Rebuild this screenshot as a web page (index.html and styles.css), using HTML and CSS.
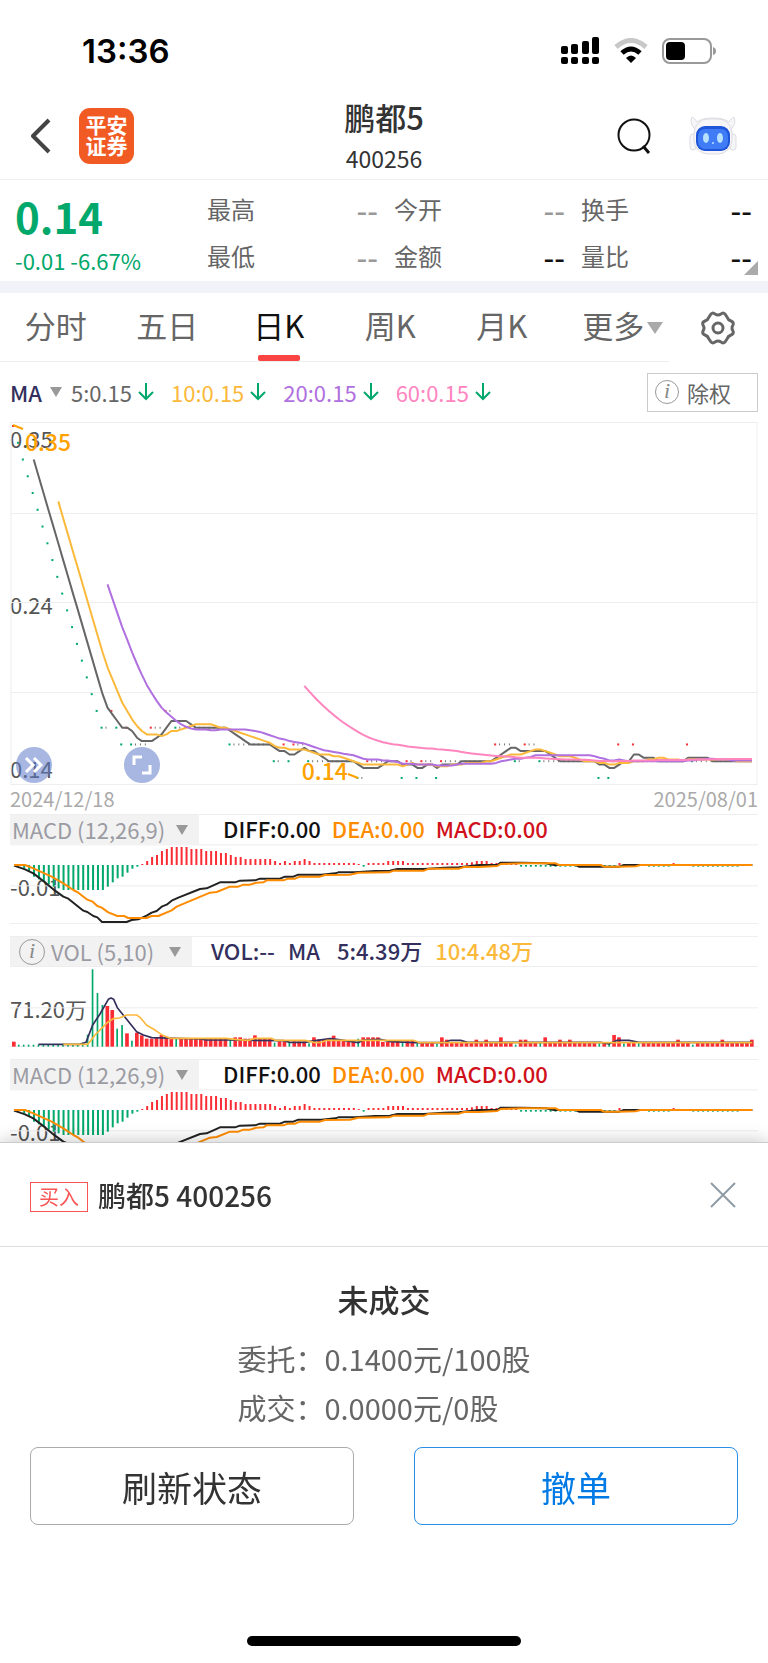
FILE: index.html
```html
<!DOCTYPE html>
<html lang="zh-CN">
  <head>
    <meta charset="UTF-8" />
    <meta name="viewport" content="width=device-width, initial-scale=1.0" />
    <title>鹏都5 400256</title>
    <link rel="stylesheet" href="styles.css" />
  </head>
  <body>
    <!-- Barre d'état -->
    <div class="status">
      <span class="time">13:36</span>
      <div class="status-icons">
        <svg width="40" height="28" viewBox="0 0 40 28">
          <rect x="1" y="9" width="7" height="8" rx="2" />
          <rect x="11" y="7" width="7" height="10" rx="2" />
          <rect x="22" y="4" width="7" height="13" rx="2" />
          <rect x="32" y="0" width="7" height="17" rx="2" />
          <rect x="1" y="20" width="7" height="7" rx="2" />
          <rect x="11" y="20" width="7" height="7" rx="2" />
          <rect x="22" y="20" width="7" height="7" rx="2" />
          <rect x="32" y="20" width="7" height="7" rx="2" />
        </svg>
        <svg width="34" height="26" viewBox="0 0 34 26" fill="none">
          <path d="M2 9 Q17 -4 32 9" stroke="#c8c8c8" stroke-width="5" />
          <path d="M8 15 Q17 7 26 15" stroke="#000" stroke-width="5" />
          <path d="M12 20 Q17 15 22 20 L17 25 Z" fill="#000" />
        </svg>
        <svg width="54" height="26" viewBox="0 0 54 26">
          <rect x="1" y="1" width="48" height="24" rx="7" fill="none" stroke="#999" stroke-width="2" />
          <rect x="4" y="4" width="19" height="18" rx="4" />
          <path d="M51 9 Q54 10 54 13 Q54 16 51 17 Z" fill="#999" />
        </svg>
      </div>
    </div>

    <!-- En-tête -->
    <header class="header">
      <div class="header-left">
        <button class="icon-btn" aria-label="返回">
          <svg width="20" height="36" viewBox="0 0 20 36">
            <path d="M18 2 L2 18 L18 34" fill="none" stroke="#444" stroke-width="4" stroke-linejoin="round" />
          </svg>
        </button>
        <span class="logo">平安<br />证券</span>
      </div>
      <div class="header-title">
        <h1>鹏都5</h1>
        <span>400256</span>
      </div>
      <div class="header-right">
        <button class="icon-btn" aria-label="搜索">
          <svg width="34" height="36" viewBox="0 0 34 36" fill="none" stroke="#111" stroke-width="2">
            <circle cx="17" cy="17" r="15.5" />
            <path d="M26 28 L32 35" stroke-width="3" />
          </svg>
        </button>
        <button class="icon-btn" aria-label="助手">
          <svg width="48" height="40" viewBox="0 0 48 40">
            <g fill="#f6f6f8" stroke="#dcdde2">
              <path d="M7 14 Q0 8 3 1 Q6 2 8 6 Q13 2 24 2 Q35 2 40 6 Q42 2 45 1 Q48 8 41 14 Z" />
              <rect x="1" y="18" width="6" height="16" rx="3" />
              <rect x="41" y="18" width="6" height="16" rx="3" />
              <rect x="5" y="3" width="38" height="35" rx="14" />
            </g>
            <rect x="7" y="10" width="34" height="25" rx="9" fill="#1f55d8" />
            <rect x="9" y="13" width="30" height="20" rx="7" fill="#3f7cf5" />
            <ellipse cx="17" cy="22" rx="3" ry="5" fill="#b8e0ff" />
            <ellipse cx="31" cy="22" rx="3" ry="5" fill="#b8e0ff" />
            <circle cx="24" cy="27" r="1" fill="#b8e0ff" />
          </svg>
        </button>
      </div>
    </header>

    <!-- Cotation -->
    <section class="quote">
      <div class="price">
        <strong>0.14</strong>
        <span>-0.01 -6.67%</span>
      </div>
      <dl class="stats">
        <div><dt>最高</dt><dd class="muted">--</dd></div>
        <div><dt>今开</dt><dd class="muted">--</dd></div>
        <div><dt>换手</dt><dd>--</dd></div>
        <div><dt>最低</dt><dd class="muted">--</dd></div>
        <div><dt>金额</dt><dd>--</dd></div>
        <div><dt>量比</dt><dd>--</dd></div>
      </dl>
    </section>

    <!-- Onglets -->
    <nav class="tabs">
      <div class="tab-list">
        <a href="#">分时</a>
        <a href="#">五日</a>
        <a href="#" class="active">日K</a>
        <a href="#">周K</a>
        <a href="#">月K</a>
        <a href="#">更多<i class="caret"></i></a>
      </div>
      <button class="icon-btn gear" aria-label="设置">
        <svg width="34" height="34" viewBox="0 0 34 34" fill="none" stroke="#666" stroke-width="3" stroke-linejoin="round">
          <path d="M10 3 Q12 1 14 3 Q17 5 20 3 Q22 1 24 3 L26 6 Q27 9 30 10 Q33 11 32 14 Q30 17 32 20 Q33 23 30 24 Q27 25 26 28 L24 31 Q22 33 20 31 Q17 29 14 31 Q12 33 10 31 L8 28 Q7 25 4 24 Q1 23 2 20 Q4 17 2 14 Q1 11 4 10 Q7 9 8 6 Z" />
          <circle cx="17" cy="17" r="5" />
        </svg>
      </button>
    </nav>

    <main class="charts">
      <div class="ma-row">
        <span class="ma-name">MA</span><i class="caret dark"></i>
        <span class="ma5">5:0.15</span><svg class="down"><use href="#down" /></svg>
        <span class="ma10">10:0.15</span><svg class="down"><use href="#down" /></svg>
        <span class="ma20">20:0.15</span><svg class="down"><use href="#down" /></svg>
        <span class="ma60">60:0.15</span><svg class="down"><use href="#down" /></svg>
        <button class="adjust"><i class="info">i</i>除权</button>
      </div>

      <div class="kline">
        <span class="axis axis-top">0.35</span>
        <span class="axis axis-mid">0.24</span>
        <span class="axis axis-bottom">0.14</span>
        <svg id="kline" viewBox="10 422 748 363"></svg>
        <span class="mark mark-high">0.35</span>
        <span class="mark mark-low">0.14</span>
        <button class="round round-next" aria-label="展开">
          <svg width="20" height="18" viewBox="0 0 20 18" fill="none" stroke="#fff" stroke-width="3">
            <path d="M2 2 L9 9 L2 16 M10 2 L17 9 L10 16" />
          </svg>
        </button>
        <button class="round round-full" aria-label="全屏">
          <svg width="20" height="20" viewBox="0 0 20 20" fill="none" stroke="#fff" stroke-width="3">
            <path d="M2 10 V2 H10 M10 18 H18 V10" />
          </svg>
        </button>
      </div>
      <div class="dates"><span>2024/12/18</span><span>2025/08/01</span></div>

      <div class="indicator">
        <button class="picker">MACD (12,26,9)<i class="caret dark"></i></button>
        <p class="macd-values"><span>DIFF:0.00</span><span class="dea">DEA:0.00</span><span class="macd">MACD:0.00</span></p>
      </div>
      <div class="plot">
        <span class="axis">-0.01</span>
        <svg class="macd-plot" viewBox="30 132 2244 240"></svg>
      </div>

      <div class="indicator">
        <button class="picker picker-vol"><i class="info">i</i>VOL (5,10)<i class="caret dark"></i></button>
        <p class="vol-values"><span>VOL:--</span><span>MA</span><span class="vol5">5:4.39万</span><span class="ma10">10:4.48万</span></p>
      </div>
      <div class="plot">
        <span class="axis">71.20万</span>
        <svg id="vol" viewBox="30 108 2244 243"></svg>
      </div>

      <div class="indicator">
        <button class="picker">MACD (12,26,9)<i class="caret dark"></i></button>
        <p class="macd-values"><span>DIFF:0.00</span><span class="dea">DEA:0.00</span><span class="macd">MACD:0.00</span></p>
      </div>
      <div class="plot">
        <span class="axis">-0.01</span>
        <svg class="macd-plot" viewBox="30 132 2244 240"></svg>
      </div>
    </main>

    <!-- Panneau de l'ordre -->
    <section class="sheet">
      <div class="sheet-head">
        <span class="tag">买入</span>
        <h2>鹏都5 400256</h2>
        <button class="icon-btn close" aria-label="关闭">
          <svg width="26" height="26" viewBox="0 0 26 26" stroke="#8f9ba5" stroke-width="2">
            <path d="M1 1 L25 25 M25 1 L1 25" />
          </svg>
        </button>
      </div>
      <h3>未成交</h3>
      <div class="order">
        <p>委托：0.1400元/100股</p>
        <p>成交：0.0000元/0股</p>
      </div>
      <div class="actions">
        <button>刷新状态</button>
        <button class="primary">撤单</button>
      </div>
      <div class="home-bar"></div>
    </section>

    <svg class="defs">
      <symbol id="down" viewBox="0 0 16 18">
        <path d="M8 0 V16 M1 9 L8 16 L15 9" fill="none" stroke="#00a86b" stroke-width="2" />
      </symbol>
    </svg>

    <script src="charts.js"></script>
  </body>
</html>
```
FILE: styles.css
```css
* {
  box-sizing: border-box;
}
body {
  margin: 0;
  min-height: 100vh;
  background: white;
  color: #333;
  font-family: "Noto Sans CJK SC", sans-serif;
}
h1,
h2,
h3,
p,
dl,
dd {
  margin: 0;
}
a {
  color: inherit;
  text-decoration: none;
}
button {
  padding: 0;
  border: none;
  background: none;
  color: inherit;
  font-family: inherit;
  cursor: pointer;
}
svg {
  display: block;
}
.icon-btn {
  flex: none;
}
.defs {
  position: absolute;
  width: 0;
  height: 0;
}
.caret {
  display: inline-block;
  border: 8px solid transparent;
  border-top: 12px solid #aaa;
  border-bottom: none;
}
.caret.dark {
  border-width: 10px 6px 0;
  border-top-color: #999;
}
.info {
  display: inline-block;
  width: 24px;
  height: 24px;
  border: 1px solid #999;
  border-radius: 50%;
  color: #888;
  font: italic 22px/20px "Liberation Serif", serif;
  text-align: center;
}

/* Barre d'état */
.status {
  display: flex;
  align-items: center;
  justify-content: space-between;
  height: 93px;
  padding: 9px 52px 0 82px;
}
.time {
  color: black;
  font: 600 33px/40px Inter, sans-serif;
}
.status-icons {
  display: flex;
  align-items: center;
  gap: 14px;
}

/* En-tête */
.header {
  display: grid;
  grid-template-columns: 1fr auto 1fr;
  align-items: center;
  height: 87px;
  padding: 0 31px;
  border-bottom: 1px solid #eee;
}
.header-left,
.header-right {
  display: flex;
  align-items: center;
}
.header-left {
  gap: 28px;
}
.header-right {
  justify-content: flex-end;
  gap: 38px;
}
.logo {
  width: 55px;
  height: 56px;
  padding-top: 6px;
  border-radius: 11px;
  background: #f15a22;
  color: white;
  font-size: 21px;
  font-weight: 700;
  line-height: 21px;
  text-align: center;
}
.header-title {
  padding-top: 2px;
  text-align: center;
}
.header-title h1 {
  font-size: 31px;
  font-weight: 500;
  line-height: 42px;
}
.header-title span {
  display: block;
  font-size: 23px;
  line-height: 40px;
}

/* Cotation */
.quote {
  position: relative;
  display: flex;
  height: 101px;
  padding: 0 16px 0 15px;
}
.quote::after {
  content: "";
  position: absolute;
  right: 10px;
  bottom: 6px;
  border: 7px solid #aaa;
  border-top-color: transparent;
  border-left-color: transparent;
}
.price {
  display: flex;
  flex-direction: column;
  width: 192px;
  padding-top: 8px;
  color: #00a86b;
}
.price strong {
  font-size: 42px;
  line-height: 56px;
}
.price span {
  font-size: 22px;
  line-height: 32px;
}
.stats {
  flex: 1;
  display: grid;
  grid-template-columns: repeat(3, 1fr);
  grid-auto-rows: 47px;
  column-gap: 16px;
  padding-top: 5px;
  font-size: 24px;
}
.stats div {
  display: flex;
  align-items: center;
  justify-content: space-between;
  line-height: 46px;
}
.stats dt {
  color: #666;
}
.stats dd {
  color: #111;
  font-size: 30px;
  font-weight: 500;
}
.stats .muted {
  color: #999;
}

/* Onglets */
.tabs {
  display: flex;
  border-top: 12px solid #f2f3f9;
  color: #666;
  font-size: 31px;
}
.tab-list {
  flex: 1;
  display: flex;
  height: 69px;
  border-bottom: 1px solid #eee;
  line-height: 64px;
  text-align: center;
  white-space: nowrap;
}
.tab-list a {
  position: relative;
  flex: 1 1 0;
}
.tab-list .caret {
  margin: 0 -19px 0 3px;
  vertical-align: 4px;
}
.tab-list .active {
  color: #111;
}
.tab-list .active::after {
  content: "";
  position: absolute;
  left: 50%;
  bottom: 0;
  width: 42px;
  height: 6px;
  margin-left: -21px;
  border-radius: 2px;
  background: #fa4343;
}
.gear {
  width: 99px;
  padding-left: 32px;
}

/* Graphiques */
.charts {
  padding: 0 10px;
}
.ma-row {
  display: flex;
  align-items: center;
  height: 60px;
  font-size: 22px;
  line-height: 30px;
}
.ma-name {
  margin-right: 8px;
  color: #33305e;
  font-weight: 500;
}
.ma-row .caret {
  margin-right: 9px;
}
.down {
  width: 16px;
  height: 18px;
  margin: 0 17px 0 6px;
}
.ma5 {
  color: #666;
}
.ma10 {
  color: #fbb93c;
}
.ma20 {
  color: #b070e0;
}
.ma60 {
  color: #ff85bf;
}
.adjust {
  display: flex;
  align-items: center;
  gap: 8px;
  width: 111px;
  height: 39px;
  margin-left: auto;
  padding-left: 7px;
  border: 1px solid #ccc;
  color: #666;
  font-size: 22px;
  line-height: 36px;
}
.kline,
.plot {
  position: relative;
}
.kline svg,
.plot svg {
  position: relative;
  width: 100%;
}
.axis,
.mark {
  position: absolute;
  left: 0;
  color: #555;
  font-size: 22px;
  line-height: 30px;
}
.axis-top {
  top: 1px;
}
.axis-mid {
  top: 46%;
}
.axis-bottom {
  bottom: 2px;
}
.plot .axis {
  top: 27px;
}
.mark {
  color: #ffa200;
  font-size: 23px;
  font-weight: 500;
}
.mark-high {
  left: 15px;
  top: 4px;
}
.mark-low {
  left: 39%;
  bottom: 0;
}
.round {
  position: absolute;
  bottom: 2px;
  display: flex;
  align-items: center;
  justify-content: center;
  width: 36px;
  height: 36px;
  border-radius: 50%;
  background: rgba(94, 124, 200, 0.55);
}
.kline .round svg {
  width: 20px;
}
.round-next {
  left: 6px;
}
.round-full {
  left: 114px;
}
.dates {
  display: flex;
  justify-content: space-between;
  height: 29px;
  color: #aaa;
  font-size: 20px;
  line-height: 28px;
}
.indicator {
  display: flex;
  height: 30px;
  border-top: 1px solid #eee;
  font-size: 22px;
  line-height: 27px;
}
.picker {
  display: flex;
  align-items: center;
  width: 189px;
  padding: 0 11px 0 2px;
  background: #f2f2f2;
  color: #9b9ba3;
  font-size: 22px;
  line-height: 27px;
}
.picker .caret {
  margin-left: auto;
}
.picker-vol {
  width: 182px;
  padding-left: 9px;
}
.picker .info {
  width: 26px;
  height: 26px;
  margin-right: 6px;
  line-height: 22px;
}
.indicator p {
  display: flex;
  font-weight: 500;
}
.macd-values {
  gap: 11px;
  padding-left: 24px;
  color: #111;
}
.dea {
  color: #ff8c00;
}
.macd {
  color: #d0111b;
}
.vol-values {
  gap: 13px;
  padding-left: 19px;
  color: #33305e;
}
.vol5 {
  padding-left: 4px;
}
.plot {
  margin-bottom: 12px;
}

/* Panneau de l'ordre */
.sheet {
  position: fixed;
  left: 0;
  right: 0;
  bottom: 0;
  border-top: 1px solid #ccc;
  background: white;
  box-shadow: 0 -2px 16px rgba(0, 0, 0, 0.2);
}
.sheet-head {
  display: flex;
  align-items: center;
  height: 104px;
  padding: 2px 32px 2px 30px;
  border-bottom: 1px solid #ddd;
}
.tag {
  width: 58px;
  height: 30px;
  margin-top: 4px;
  border: 1px solid #fa5555;
  color: #fa5555;
  font-size: 20px;
  line-height: 28px;
  text-align: center;
}
.sheet h2 {
  margin-left: 10px;
  font-size: 28px;
  font-weight: 500;
}
.close {
  margin-left: auto;
}
.sheet h3 {
  padding-top: 26px;
  font-size: 31px;
  font-weight: 500;
  line-height: 52px;
  text-align: center;
}
.order {
  width: max-content;
  margin: 9px auto 0;
  color: #666;
  font-size: 29px;
  line-height: 49px;
}
.actions {
  display: flex;
  gap: 60px;
  padding: 15px 30px 0;
}
.actions button {
  flex: 1;
  height: 78px;
  border: 1px solid #aaa;
  border-radius: 8px;
  font-size: 35px;
}
.actions .primary {
  border-color: #2b8ee8;
  color: #007be5;
}
.home-bar {
  width: 274px;
  height: 10px;
  margin: 111px auto 17px;
  border-radius: 5px;
  background: black;
}
```
FILE: charts.js
```js
const RED = "#fa2d35";
const GREEN = "#00a86b";

// [nombre de jours, valeur] -> liste de valeurs
function expand(runs) {
  return runs.flatMap(([count, value]) => Array(count).fill(value));
}

function line(points, color, width) {
  return `<polyline points="${points}" fill="none" stroke="${color}" stroke-width="${width}" stroke-linejoin="round"/>`;
}

function rect(x, y, w, h, color) {
  return `<rect x="${x}" y="${y}" width="${w}" height="${h}" fill="${color}"/>`;
}

// Cours de clôture en centimes : baisse de 0.35 à 0.18 puis paliers
const closes = [];
for (let c = 35; c >= 18; c--) closes.push(c);
closes.push(
  ...expand([
    [2, 17], [1, 18], [1, 17], [1, 16], [1, 17], [4, 16], [3, 17], [2, 18],
    [11, 17], [9, 16], [2, 15], [1, 16], [1, 15], [3, 16], [10, 15], [2, 14],
    [7, 15], [1, 14], [2, 15], [1, 14], [3, 15], [1, 14], [11, 15], [4, 16],
    [2, 15], [3, 16], [12, 15], [1, 14], [1, 15], [1, 14], [1, 15], [1, 16],
    [2, 15], [1, 16], [10, 15], [1, 16], [13, 15],
  ])
);

const dayX = (i) => 13 + i * 4.92;
const priceY = (c) => 426 + (35 - c) * 16.76;

function average(n, color) {
  const points = [];
  for (let i = n - 1; i < closes.length; i++) {
    const sum = closes.slice(i - n + 1, i + 1).reduce((a, b) => a + b, 0);
    points.push((dayX(i) + 1).toFixed(1) + "," + priceY(sum / n).toFixed(1));
  }
  return line(points.join(" "), color, 2);
}

let kline = `<rect x="11" y="422.5" width="746" height="362" fill="none" stroke="#eee"/>`;
[513, 602, 692].forEach((y) => (kline += rect(11, y, 746, 1, "#eee")));
closes.forEach((c, i) => {
  const prev = i ? closes[i - 1] : 0;
  const color = c > prev ? RED : c < prev ? GREEN : "#777";
  kline += rect(dayX(i) - 1, priceY(c) - 1, c === prev ? 1 : 2, 2, color);
});
kline += average(5, "#666") + average(10, "#fbb93c");
kline += average(20, "#b070e0") + average(60, "#ff85bf");
kline += line("13,425 23,429", "#ffa200", 2);
kline += line("348,774 358,778", "#ffa200", 2);
document.getElementById("kline").innerHTML = kline;

// MACD
const diff =
  "42,197 60,203 75,208 100,220 130,243 165,272 190,290 205,296 250,332 262,336 280,348 292,352 306,366 380,366 395,360 415,358 440,347 455,338 470,333 485,320 500,314 515,302 535,293 600,267 620,265 660,247 705,247 720,242 765,241 780,236 840,236 855,230 880,230 895,224 965,224 1005,220 1015,217 1065,217 1125,213 1170,212 1192,207 1272,207 1332,203 1377,202 1437,195 1492,195 1502,188 1567,188 1637,190 1662,195 1727,195 1737,200 1857,200 1872,195 2257,195";
const dea =
  "42,195 75,195 100,205 155,230 190,250 220,270 235,278 262,299 278,305 292,318 305,323 325,337 352,348 372,348 385,354 440,354 455,348 475,348 515,331 530,320 630,278 650,276 690,260 715,260 730,254 750,254 770,248 790,247 800,241 850,241 865,236 885,236 900,230 960,230 975,225 1050,224 1075,218 1167,217 1182,212 1272,212 1287,206 1377,206 1392,201 1437,201 1492,198 1502,192 1567,190 1667,190 1677,195 1802,195 1812,200 1857,200 1907,199 1922,195 2257,195";
const bars = expand([
  [2, 0], [1, -10], [1, -20], [1, -35], [1, -43], [1, -51], [1, -58], [1, -65],
  [1, -70], [9, -75], [1, -65], [1, -52], [1, -40], [1, -35], [1, -23],
  [1, -11], [1, -5], [1, 3], [1, 12], [1, 24], [1, 30], [1, 42], [1, 48],
  [4, 54], [3, 48], [3, 42], [2, 36], [1, 30], [2, 24], [6, 18], [1, 12],
  [1, 6], [1, 12], [1, 6], [2, 12], [1, 18], [1, 12], [9, 6], [1, 3],
  [1, -5], [4, 6], [4, 12], [13, 6], [1, 8], [3, 12], [6, 6],
  [20, -5], [1, 6], [5, 3], [5, -5], [1, 6], [3, 3], [10, -5],
]);

let macd = "";
[133, 256, 369].forEach((y) => (macd += rect(30, y, 2244, 3, "#eee")));
bars.forEach((v, i) => {
  const x = 40 + i * 14.76;
  if (v > 0) macd += rect(x, 195 - v, 6, v, RED);
  if (v < 0) macd += rect(x, 195, 6, -v, GREEN);
});
macd += line(diff, "#222", 6) + line(dea, "#ff8c00", 6);
document.querySelectorAll(".macd-plot").forEach((svg) => {
  svg.innerHTML = macd;
});

// Volume : une valeur négative est un jour de baisse
const volumes = expand([
  [1, 15], [13, -6], [1, -12], [1, -36], [1, -232], [1, -161], [1, -125],
  [1, 122], [1, 110], [1, -54], [1, -65], [1, 40], [1, -18], [1, 42], [1, 34],
  [2, 24], [1, 28], [1, 35], [1, 30], [1, 24], [1, -24], [10, 24], [1, -20],
  [2, 28], [2, 24], [1, 34], [3, 24], [1, -12], [2, 16], [1, -12], [3, 16],
  [1, -10], [1, 28], [2, 22], [1, 26], [1, 33], [3, 20], [1, 14], [1, -24],
  [4, 28], [4, 14], [1, -12], [2, 18], [1, -10], [3, 12], [1, -8], [1, 28],
  [1, 21], [5, 14], [1, 21], [1, 14], [1, 21], [2, 14], [1, 28], [2, 12],
  [1, -6], [2, 21], [2, 14], [1, -12], [1, 28], [2, 14], [1, 21], [1, 14],
  [1, 21], [5, 14], [1, -10], [1, 14], [1, -10], [1, 35], [1, 28], [1, -10],
  [2, 14], [1, -10], [7, 14], [1, 21], [2, 14], [1, -6], [5, 14], [1, 21],
  [5, 14], [1, 21],
]);
const vol5 =
  "115,343 240,343 258,337 278,285 300,252 325,208 333,204 341,208 352,233 410,305 430,315 455,323 600,327 620,330 690,330 850,332 870,337 915,337 930,334 990,326 1010,328 1050,334 1075,338 1090,330 1140,328 1172,335 1247,338 1332,338 1352,331 1382,331 1402,337 1802,337 1827,342 1852,331 1887,331 1917,337 2257,337";
const vol10 =
  "190,343 262,343 270,335 285,315 325,275 340,266 358,264 380,255 410,255 420,262 440,286 460,297 485,314 510,325 680,325 710,329 745,331 765,325 815,325 825,331 915,331 945,338 965,337 980,331 1240,331 1260,338 2257,338";

let vol = "";
[108, 232, 348].forEach((y) => (vol += rect(30, y, 2244, 3, "#eee")));
volumes.forEach((v, i) => {
  const x = 41 + i * 14.76;
  if (v > 0) vol += rect(x - 5, 350 - v, 11, v, RED);
  else vol += rect(x - 2, 350 + v, 5, -v, GREEN);
});
vol += line(vol5, "#33305e", 5) + line(vol10, "#fbb93c", 5);
document.getElementById("vol").innerHTML = vol;
```
